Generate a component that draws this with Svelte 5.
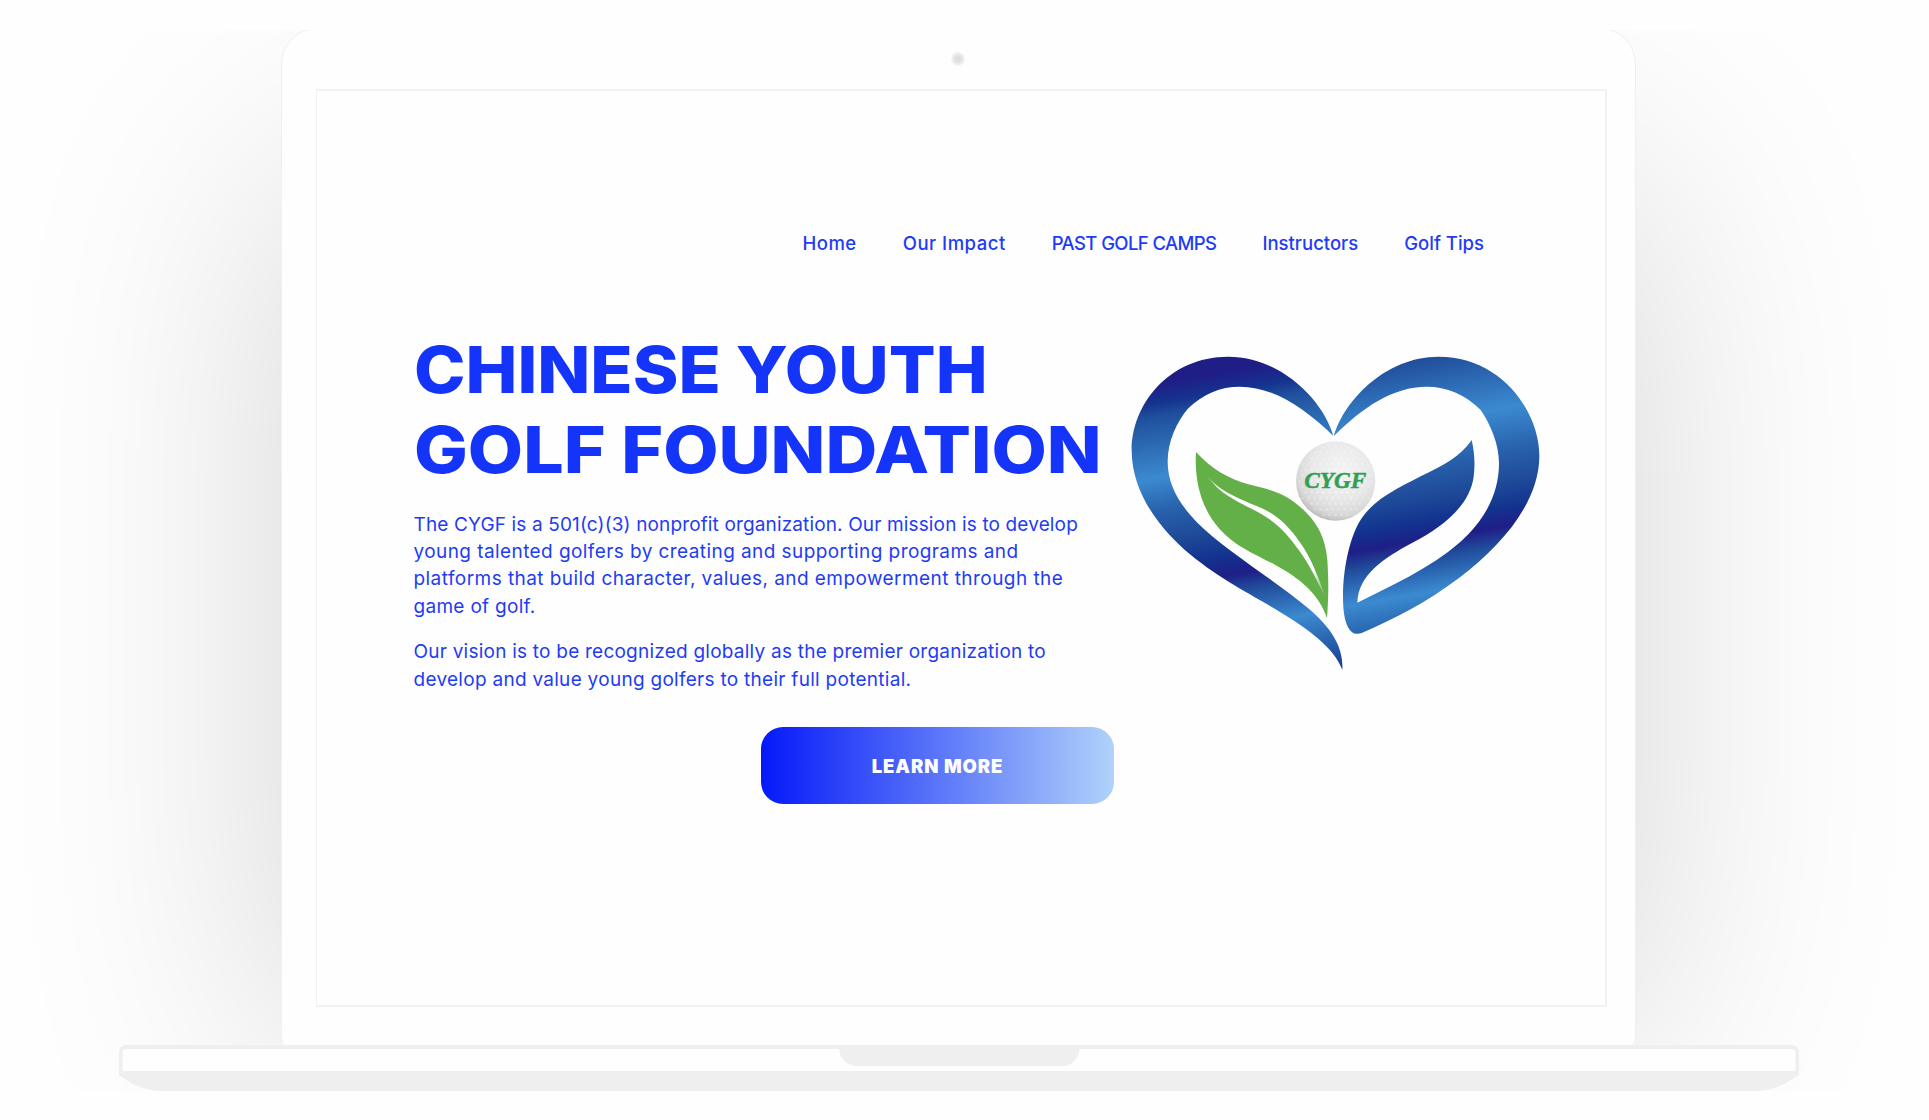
<script>
  const nav = [
    { label: 'Home', fit: 'wide' },
    { label: 'Our Impact', fit: 'wide' },
    { label: 'PAST GOLF CAMPS', fit: 'tight' },
    { label: 'Instructors', fit: 'normal' },
    { label: 'Golf Tips', fit: 'normal' }
  ];

  const mission = [
    ['The CYGF is a 501(c)(3) nonprofit organization. Our mission is to develop', 'm1'],
    ['young talented golfers by creating and supporting programs and', 'm2'],
    ['platforms that build character, values, and empowerment through the', 'm3'],
    ['game of golf.', 'm4']
  ];
  const vision = [
    ['Our vision is to be recognized globally as the premier organization to', 'v1'],
    ['develop and value young golfers to their full potential.', 'v2']
  ];

  // Dimples on the golf ball, laid out on a staggered grid inside the circle.
  const dimples = [];
  for (let row = -6; row <= 6; row++) {
    for (let col = -6; col <= 6; col++) {
      const x = col * 18 + (row % 2 ? 9 : 0);
      const y = row * 17;
      const d = Math.hypot(x, y);
      if (d < 112) dimples.push({ x: 677 + x, y: 453 + y, r: 8 - d * 0.03 });
    }
  }
</script>

<main class="stage">
  <section class="lid">
    <div class="camera"></div>
    <div class="screen">
      <nav>
        {#each nav as item}
          <a href="#top" class={item.fit}>{item.label}</a>
        {/each}
      </nav>
      <div class="hero">
        <div class="copy">
          <h1>
            <span class="t1">CHINESE YOUTH</span>
            <span class="t2">GOLF FOUNDATION</span>
          </h1>
          <p>{#each mission as [text, fit]}<span class={fit}>{text}</span>{/each}</p>
          <p>{#each vision as [text, fit]}<span class={fit}>{text}</span>{/each}</p>
          <button>LEARN MORE</button>
        </div>
        <svg class="logo" viewBox="12 0 1338 1080" aria-label="CYGF logo">
          <defs>
            <linearGradient id="ribbon" gradientUnits="userSpaceOnUse" x1="0" y1="0" x2="187" y2="1098">
              <stop offset="0.165" stop-color="#1f1e86" />
              <stop offset="0.215" stop-color="#15338f" />
              <stop offset="0.25" stop-color="#1f4f9c" />
              <stop offset="0.415" stop-color="#3b8ad0" />
              <stop offset="0.5" stop-color="#2862ad" />
              <stop offset="0.58" stop-color="#1f4b99" />
              <stop offset="0.65" stop-color="#12338f" />
              <stop offset="0.705" stop-color="#1f1e86" />
              <stop offset="0.745" stop-color="#1f4a9a" />
              <stop offset="0.845" stop-color="#3b8ad0" />
              <stop offset="0.93" stop-color="#2760ac" />
              <stop offset="1" stop-color="#1b3c92" />
            </linearGradient>
            <linearGradient id="ribbonRight" gradientUnits="userSpaceOnUse" x1="0" y1="0" x2="187" y2="1098">
              <stop offset="0.21" stop-color="#1f4b99" />
              <stop offset="0.385" stop-color="#3b8ad0" />
              <stop offset="0.5" stop-color="#2860ac" />
              <stop offset="0.58" stop-color="#1f4b99" />
              <stop offset="0.65" stop-color="#12338f" />
              <stop offset="0.7" stop-color="#1f1e86" />
              <stop offset="0.745" stop-color="#1f4a9a" />
              <stop offset="0.84" stop-color="#3b8ad0" />
              <stop offset="0.93" stop-color="#2760ac" />
            </linearGradient>
            <radialGradient id="ball" cx="0.58" cy="0.35" r="0.68">
              <stop offset="0" stop-color="#f5f5f5" />
              <stop offset="0.55" stop-color="#e9e9e9" />
              <stop offset="0.85" stop-color="#d8d8d8" />
              <stop offset="1" stop-color="#b9b9b9" />
            </radialGradient>
            <linearGradient id="vein" gradientUnits="userSpaceOnUse" x1="285" y1="430" x2="645" y2="795">
              <stop offset="0" stop-color="#fff" stop-opacity="0" />
              <stop offset="0.12" stop-color="#fff" />
              <stop offset="0.85" stop-color="#fff" />
              <stop offset="1" stop-color="#fff" stop-opacity="0.1" />
            </linearGradient>
          </defs>
          <path
            fill="url(#ribbon)"
            d="M670 318C642 215 515 80 355 80C175 80 65 225 65 360C65 500 165 610 240 673C335 752 440 802 505 843C590 893 675 955 697 1020C701 955 668 895 590 831C500 755 345 660 262 578C205 520 173 460 173 395C173 335 200 275 235 235C280 192 330 170 390 170C485 170 580 230 670 318Z"
          />
          <path
            fill="url(#ribbonRight)"
            d="M672 318C700 215 825 80 985 80C1175 80 1288 245 1288 378C1288 520 1170 650 1050 742C950 818 850 868 755 909C718 922 699 880 699 800C699 710 722 610 757 562C800 500 880 465 960 425C1030 392 1065 360 1085 330C1093 365 1096 400 1091 440C1080 525 1000 590 910 637C820 685 745 735 742 818C840 770 960 715 1050 637C1125 570 1167 490 1167 400C1167 345 1143 285 1112 240C1065 192 1010 170 950 170C850 170 757 232 672 318Z"
          />
          <path
            fill="#64b048"
            d="M258 366C305 418 355 445 415 463C460 475 505 482 545 511C600 550 645 600 652 690C656 750 656 800 651 865C630 795 570 745 500 707C440 674 375 650 328 596C270 530 253 445 258 366Z"
          />
          <path
            fill="url(#vein)"
            d="M285 428C320 480 380 502 440 528C510 556 545 600 580 652C610 700 628 750 645 800C620 750 600 705 568 662C530 610 500 575 432 540C370 508 320 485 285 428Z"
          />
          <circle cx="677" cy="453" r="119" fill="url(#ball)" />
          {#each dimples as d}
            <circle class="dimple" cx={d.x} cy={d.y} r={d.r} />
          {/each}
          <text x="583" y="474" textLength="186" lengthAdjust="spacingAndGlyphs">CYGF</text>
        </svg>
      </div>
    </div>
  </section>
  <svg class="base" viewBox="0 0 1681 46" preserveAspectRatio="none">
    <path fill="#efefef" d="M0 8Q0 0 8 0H1673Q1681 0 1681 8V30C1664 41 1654 46 1634 46H45C25 46 12 39 0 30Z" />
    <path fill="#fefefe" d="M3.5 8Q3.5 4 7 4H1673.5Q1677.5 4 1677.5 8V26H3.5Z" />
    <path fill="#efefef" d="M720.5 2H961.500C961 14 953 21 944 21H738C729 21 721 14 720.500 4Z" />
  </svg>
</main>

<style>
  :global(body) {
    background: #fefefe;
  }

  .stage {
    position: relative;
    box-sizing: border-box;
    width: 1929px;
    height: 1061px;
    margin-top: 30px;
    overflow: hidden;
    display: flow-root;
    font-family: Inter, 'Liberation Sans', sans-serif;
    color: #1f3cf5;
  }

  .stage::before {
    content: '';
    position: absolute;
    left: 282px;
    top: 150px;
    width: 1353px;
    height: 870px;
    box-shadow: 0 0 275px rgba(0, 0, 0, 0.165);
  }

  .lid {
    position: relative;
    box-sizing: border-box;
    width: 1355px;
    height: 1023px;
    margin: -2px 0 0 281px;
    padding: 23px 27px 0 34px;
    background: #fefefe;
    border: 1px solid #f0f0f0;
    border-radius: 36px 36px 14px 14px;
  }

  .camera {
    width: 14px;
    height: 14px;
    margin: 0 auto 23px 635px;
    border-radius: 50%;
    background: radial-gradient(circle, #dedede 0 25%, #ebebeb 50%, #f6f6f6 70%);
  }

  .screen {
    box-sizing: border-box;
    width: 1291px;
    height: 918px;
    padding-top: 138px;
    border: 2px solid #f2f2f2;
    border-left-width: 1px;
  }

  nav {
    display: flex;
    justify-content: flex-end;
    gap: 46px;
    padding-right: 121px;
    font-size: 18.5px;
    font-weight: 500;
    line-height: 28px;
    white-space: nowrap;
  }

  nav a {
    color: inherit;
    text-decoration: none;
  }

  .wide { letter-spacing: 0.5px; }
  .tight { letter-spacing: -0.6px; }
  .normal { letter-spacing: 0; }

  .hero {
    display: flex;
    align-items: flex-start;
    padding: 73px 0 0 96px;
  }

  .copy {
    display: flex;
    flex-direction: column;
    width: 701px;
  }

  h1 {
    margin: 0 0 20px;
    font-size: 64.5px;
    font-weight: 800;
    line-height: 80.3px;
    color: #1434fa;
  }

  h1 span {
    display: block;
    white-space: nowrap;
    transform-origin: left;
  }

  .t1 { transform: translateX(1px) scaleX(1.075); }
  .t2 { transform: translateX(1px) scaleX(1.11); }

  p {
    margin: 0 0 18.2px;
    padding-left: 0.5px;
    font-size: 19px;
    line-height: 27.4px;
    white-space: nowrap;
  }

  p span { display: block; }

  .m1 { letter-spacing: 0.14px; }
  .m2 { letter-spacing: 0.42px; }
  .m3 { letter-spacing: 0.44px; }
  .m4 { letter-spacing: 0.3px; }
  .v1 { letter-spacing: 0.23px; }
  .v2 { letter-spacing: 0.28px; }

  button {
    align-self: flex-end;
    width: 353px;
    height: 77px;
    margin-top: 16px;
    padding: 0;
    border: 0;
    border-radius: 22px;
    background: linear-gradient(90deg, #0519f8, #b0d2fa);
    color: #fff;
    font: 900 18.5px Inter, sans-serif;
    letter-spacing: 0.9px;
  }

  .logo {
    flex: none;
    width: 446px;
    height: 360px;
  }

  .logo text {
    font: italic bold 72px 'Liberation Serif', serif;
    fill: #2f9f57;
    stroke: #2f9f57;
    stroke-width: 1.5;
  }

  .dimple {
    fill: rgba(255, 255, 255, 0.25);
    stroke: rgba(0, 0, 0, 0.035);
    stroke-width: 2;
  }

  .base {
    position: relative;
    display: block;
    width: 1680px;
    height: 46px;
    margin: -6px 0 0 118.5px;
  }
</style>
